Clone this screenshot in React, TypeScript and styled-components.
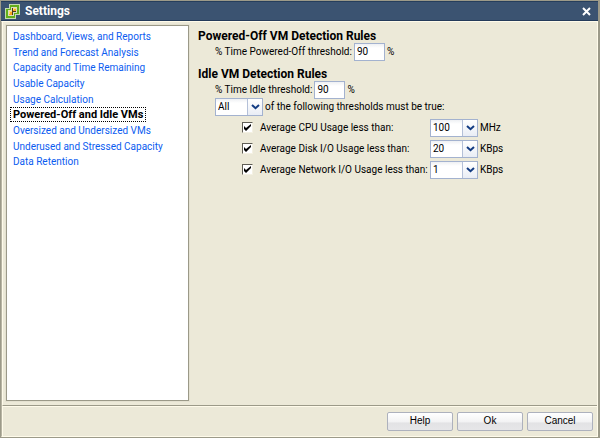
import React, { useState } from "react";
import styled, { createGlobalStyle, css } from "styled-components";

const GlobalStyle = createGlobalStyle`
  * { box-sizing: border-box; }
  body {
    margin: 0;
    background: #ece9d8;
    color: #000;
    font: 10px/14px Roboto, Tahoma, sans-serif;
  }
`;

const Dialog = styled.div`
  display: flex;
  flex-direction: column;
  min-height: 100vh;
  border: solid #9c9a89;
  border-width: 1px 2px 1px 1px;
  background: #ece9d8;
`;

const TitleBar = styled.header`
  display: flex;
  align-items: center;
  height: 20px;
  padding: 0 7px 0 4px;
  gap: 5px;
  background: #3b5371;
  border-top: 1px solid #263e5c;
  border-bottom: 1px solid #243b5a;
  color: #fff;
`;

const Title = styled.h1`
  flex: 1;
  margin: 0;
  font-size: 12px;
  line-height: 16px;
`;

const CloseButton = styled.button`
  display: flex;
  padding: 0;
  border: 0;
  background: none;
  color: #fff;
`;

const Frame = styled.div`
  display: flex;
  flex: 1;
  flex-direction: column;
  border: 1px solid #fffbea;
  border-left-color: #b8b5a4;
`;

const Body = styled.main`
  display: flex;
  flex: 1;
  gap: 9px;
  padding: 3px 4px 4px 3px;
  border-left: 1px solid #fffbea;
`;

const Nav = styled.nav`
  flex: 0 0 183px;
  padding: 3px;
  background: #fff;
  border: 1px solid #9b9988;
  outline: 1px solid #e4e1d0;
`;

const NavList = styled.ul`
  display: grid;
  grid-template-rows: repeat(9, 1fr);
  justify-items: start;
  height: 141px;
  margin: 0;
  padding: 0;
  list-style: none;
`;

const NavLink = styled.a<{ $active?: boolean }>`
  display: block;
  padding: 0 2px;
  border: 1px dotted transparent;
  color: #0b5cf0;
  line-height: 13px;
  white-space: nowrap;
  text-decoration: none;
  ${(p) =>
    p.$active &&
    css`
      border-color: #000;
      color: #000;
      font-size: 11px;
      font-weight: bold;
    `}
`;

const Form = styled.form`
  flex: 1;
  min-width: 0;
`;

const Section = styled.section`
  padding-top: 5px;
  margin-bottom: 3px;
`;

const Heading = styled.h2`
  margin: 0;
  font-size: 12px;
  line-height: 13px;
`;

const Row = styled.div`
  display: flex;
  align-items: center;
  gap: 2px;
  height: 17px;
  padding-left: 17px;
  white-space: nowrap;
`;

const Rules = styled.div`
  display: grid;
  grid-template-columns: 11px 177px 48px auto;
  grid-auto-rows: 17px;
  align-items: center;
  gap: 4px 0;
  padding: 4px 0 0 44px;
  white-space: nowrap;
`;

const RuleLabel = styled.label`
  padding-left: 7px;
`;
const Unit = styled.span`
  padding-left: 2px;
`;

const field = css`
  height: 18px;
  margin: 0;
  border: 1px solid #a3b2cf;
  border-radius: 0;
  background: linear-gradient(#eef0f3, #fff 4px);
  color: #000;
  font: inherit;
`;

const NumberBox = styled.input`
  ${field}
  width: 31px;
  padding: 0 2px;
`;

const SelectWrap = styled.span`
  display: grid;
  grid-template-columns: 1fr 16px;
  width: 48px;
`;

const Select = styled.select`
  ${field}
  grid-area: 1 / 1 / 2 / 3;
  width: 100%;
  padding: 0 16px 0 2px;
  appearance: none;
`;

const Arrow = styled.span`
  display: flex;
  grid-area: 1 / 2;
  align-items: center;
  justify-content: center;
  margin: 1px 1px 1px 0;
  background: linear-gradient(#fff, #e9edf5);
  border-left: 1px solid #b4c0d8;
  pointer-events: none;
`;

const Check = styled.input`
  width: 11px;
  height: 11px;
  margin: 0;
  appearance: none;
  background: #fff;
  border: 1px solid;
  border-color: #5f5d54 #f4f1e3 #f4f1e3 #5f5d54;
  &:checked {
    background: #fff
      url("data:image/svg+xml,%3Csvg xmlns='http://www.w3.org/2000/svg' viewBox='0 0 9 9'%3E%3Cpath d='M1 3v3l2 2 5-5V1L3 5z'/%3E%3C/svg%3E")
      center / 9px 9px no-repeat;
  }
`;

const Footer = styled.footer`
  display: flex;
  align-items: center;
  justify-content: flex-end;
  gap: 4px;
  height: 31px;
  padding-right: 4px;
  border-top: 1px solid #9c9a89;
  border-left: 1px solid #fffbea;
  box-shadow: inset 0 1px #fffbea;
`;

const Button = styled.button`
  width: 66px;
  height: 19px;
  padding: 0;
  border: 1px solid #adb1bd;
  border-radius: 2px;
  background: linear-gradient(#fff, #f3f3f4 50%, #e3e3e5 60%, #e6e6e8);
  color: #000;
  font: 10px/16px "Liberation Sans", Arial, sans-serif;
`;

const Logo = () => (
  <svg width="15" height="15" viewBox="0 0 15 15" aria-hidden="true" shapeRendering="crispEdges">
    <path d="M4 0h11v11h-4v4H0V4h4z" fill="#c3dcae" />
    <path d="M5 1h9v9h-4v4H1V5h4z" fill="#62ae1b" />
    <path d="M6 3h6v6H9v3H3V6h3z" fill="#d9dfbd" />
    <path d="M7 4h4v4H8v3H4V7h3z" fill="#4a3a1c" />
    <path d="M8 4h3v3H8zM4 7h3v4H4z" fill="#f9a81d" />
    <path d="M8 4h3v1H9v1H8zM4 7h3v1H5v2H4z" fill="#ffdf72" />
  </svg>
);

const Chevron = () => (
  <svg width="9" height="6" viewBox="0 0 9 6" aria-hidden="true">
    <path d="M1 1l3.5 3.2L8 1" fill="none" stroke="#123b82" strokeWidth="2" />
  </svg>
);

const pages = [
  "Dashboard, Views, and Reports",
  "Trend and Forecast Analysis",
  "Capacity and Time Remaining",
  "Usable Capacity",
  "Usage Calculation",
  "Powered-Off and Idle VMs",
  "Oversized and Undersized VMs",
  "Underused and Stressed Capacity",
  "Data Retention",
];

const rules = [
  { id: "cpu", label: "Average CPU Usage less than:", values: ["100", "200", "500"], unit: "MHz" },
  { id: "disk", label: "Average Disk I/O Usage less than:", values: ["20", "50", "100"], unit: "KBps" },
  { id: "net", label: "Average Network I/O Usage less than:", values: ["1", "5", "10"], unit: "KBps" },
];

function DropDown({ label, options }: { label: string; options: string[] }) {
  return (
    <SelectWrap>
      <Select aria-label={label} defaultValue={options[0]}>
        {options.map((o) => (
          <option key={o}>{o}</option>
        ))}
      </Select>
      <Arrow>
        <Chevron />
      </Arrow>
    </SelectWrap>
  );
}

export default function App() {
  const [page, setPage] = useState("Powered-Off and Idle VMs");
  return (
    <>
      <GlobalStyle />
      <Dialog role="dialog" aria-labelledby="title">
        <TitleBar>
          <Logo />
          <Title id="title">Settings</Title>
          <CloseButton type="button" aria-label="Close">
            <svg width="9" height="9" viewBox="0 0 9 9" aria-hidden="true">
              <path d="M1 1l7 7M8 1L1 8" stroke="currentColor" strokeWidth="2" />
            </svg>
          </CloseButton>
        </TitleBar>
        <Frame>
          <Body>
            <Nav aria-label="Settings pages">
              <NavList>
                {pages.map((p) => (
                  <li key={p}>
                    <NavLink href="#" $active={p === page} onClick={() => setPage(p)}>
                      {p}
                    </NavLink>
                  </li>
                ))}
              </NavList>
            </Nav>
            <Form id="settings">
              <Section>
                <Heading>Powered-Off VM Detection Rules</Heading>
                <Row>
                  <label htmlFor="off">% Time Powered-Off threshold:</label>
                  <NumberBox id="off" defaultValue="90" />
                  <span>%</span>
                </Row>
              </Section>
              <Section>
                <Heading>Idle VM Detection Rules</Heading>
                <Row>
                  <label htmlFor="idle">% Time Idle threshold:</label>
                  <NumberBox id="idle" defaultValue="90" />
                  <span>%</span>
                </Row>
                <Row>
                  <DropDown label="Thresholds to meet" options={["All", "Any"]} />
                  <span>of the following thresholds must be true:</span>
                </Row>
                <Rules>
                  {rules.map((r) => (
                    <React.Fragment key={r.id}>
                      <Check type="checkbox" id={r.id} defaultChecked />
                      <RuleLabel htmlFor={r.id}>{r.label}</RuleLabel>
                      <DropDown label={r.label} options={r.values} />
                      <Unit>{r.unit}</Unit>
                    </React.Fragment>
                  ))}
                </Rules>
              </Section>
            </Form>
          </Body>
          <Footer>
            <Button type="button">Help</Button>
            <Button type="submit" form="settings">Ok</Button>
            <Button type="button">Cancel</Button>
          </Footer>
        </Frame>
      </Dialog>
    </>
  );
}
